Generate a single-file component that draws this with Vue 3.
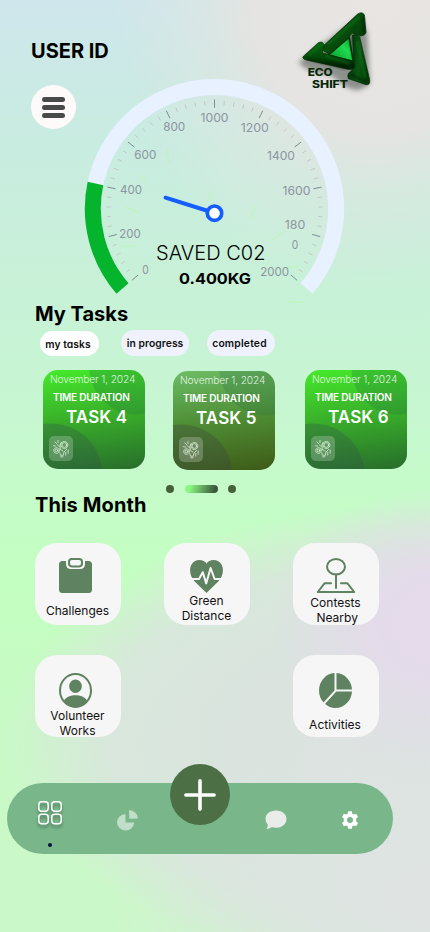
<script setup>
const CX = 214.5
const CY = 208.8
const START = 139.1
const SWEEP = 261.8

function polar(r, deg) {
  const a = (deg * Math.PI) / 180
  return [CX + r * Math.cos(a), CY + r * Math.sin(a)]
}

function arc(r, from, to) {
  const [x1, y1] = polar(r, from)
  const [x2, y2] = polar(r, to)
  const large = to - from > 180 ? 1 : 0
  return `M${x1} ${y1}A${r} ${r} 0 ${large} 1 ${x2} ${y2}`
}

const track = arc(121.7, START, START + SWEEP)
const progress = arc(121.7, START, 192)

const ticks = Array.from({ length: 51 }, (_, i) => {
  const major = i % 5 === 0
  const deg = START + (SWEEP * i) / 50
  const [x1, y1] = polar(major ? 109.3 : 108.3, deg)
  const [x2, y2] = polar(major ? 101 : 103.8, deg)
  return { x1, y1, x2, y2, major }
})

const labels = [
  { t: '0', x: 145.5, y: 273.7, w: 6.5 },
  { t: '200', x: 130, y: 238, w: 21.5 },
  { t: '400', x: 131, y: 194.3, w: 22 },
  { t: '600', x: 145.3, y: 159.3, w: 22 },
  { t: '800', x: 174.2, y: 131.3, w: 22 },
  { t: '1000', x: 214.5, y: 122, w: 28 },
  { t: '1200', x: 254.7, y: 132.3, w: 28 },
  { t: '1400', x: 281, y: 159.5, w: 28 },
  { t: '1600', x: 296.5, y: 194.7, w: 28 },
  { t: '180', x: 295, y: 229, w: 20.5 },
  { t: '0', x: 295, y: 249, w: 6.5 },
  { t: '2000', x: 274.7, y: 276, w: 29 },
]

const streaks = [
  'M166.5 149.5L170 163', 'M139.5 175L150 185.5', 'M125 207L139 212.5', 'M121 246H135',
  'M211 192V200', 'M256 206L250 219', 'M282.5 232.5L271 241', 'M298 266L286 268', 'M288 301.5L303 302.5',
]

const filters = [
  { name: 'my tasks', cls: 'pill-active' },
  { name: 'in progress', cls: '' },
  { name: 'completed', cls: 'pill-done' },
]

const tasks = [
  { name: 'TASK 4', cls: '' },
  { name: 'TASK 5', cls: 'card-olive' },
  { name: 'TASK 6', cls: '' },
]
</script>

<template>
  <main class="screen">
    <section class="hero">
      <svg class="gauge" viewBox="0 0 430 300">
        <path :d="track" class="track" />
        <path :d="progress" class="progress" />
        <line v-for="(k, i) in ticks" :key="i" :x1="k.x1" :y1="k.y1" :x2="k.x2" :y2="k.y2" :class="k.major ? 'major' : 'minor'" />
        <path v-for="s in streaks" :key="s" :d="s" class="streak" />
        <text v-for="(l, i) in labels" :key="'l' + i" :x="l.x" :y="l.y" :textLength="l.w" lengthAdjust="spacingAndGlyphs" class="label">{{ l.t }}</text>
        <path d="M165.5 197.7L214.5 213" class="needle" />
        <circle cx="214.5" cy="213.2" r="7.2" class="hub" />
        <text x="156" y="260" textLength="109.5" class="saved">SAVED C02</text>
        <text x="179" y="283.7" textLength="72" lengthAdjust="spacingAndGlyphs" class="amount">0.400KG</text>
      </svg>
      <header class="top">
        <div class="user">
          <h1 class="title">USER ID</h1>
          <button class="menu" aria-label="Menu"><i></i><i></i><i></i></button>
        </div>
        <svg class="logo" viewBox="0 0 390 330">
          <defs>
            <linearGradient id="ga" x1="0" y1="0" x2="1" y2="1"><stop offset="0" stop-color="#0b5a13" /><stop offset=".45" stop-color="#07500d" /><stop offset="1" stop-color="#012b04" /></linearGradient>
            <linearGradient id="gb" x1="0" y1="0" x2=".3" y2="1"><stop offset="0" stop-color="#08700f" /><stop offset=".6" stop-color="#04470a" /><stop offset="1" stop-color="#012604" /></linearGradient>
            <linearGradient id="gc" x1="0" y1="0" x2="1" y2=".2"><stop offset="0" stop-color="#012e04" /><stop offset=".6" stop-color="#0a5713" /><stop offset="1" stop-color="#023a07" /></linearGradient>
            <linearGradient id="gi" x1="0" y1="1" x2="1" y2="0"><stop offset="0" stop-color="#0a8f2a" /><stop offset=".6" stop-color="#1ddc50" /><stop offset="1" stop-color="#0a9a2b" /></linearGradient>
            <filter id="soft" x="-30%" y="-30%" width="160%" height="160%"><feGaussianBlur stdDeviation="8" /></filter>
            <filter id="edge"><feGaussianBlur stdDeviation="2.5" /></filter>
          </defs>
          <path d="M86 186L160 130L270 48L292 100L300 250Q270 282 230 262L180 225Q100 214 86 186Z" fill="#343c34" opacity=".5" filter="url(#soft)" />
          <path d="M237 112L174 166L250 184Z" fill="url(#gi)" stroke="#033d0b" stroke-width="5" />
          <path d="M160 152L162 136L262 43Q275 33 283 44L288 97Q286 107 272 108L247 100L233 114L178 163Z" class="arm" fill="url(#ga)" />
          <path d="M247 105Q256 100 269 110L299 239Q301 256 288 254L235 236Q229 220 246 211L252 189Z" class="arm" fill="url(#gc)" />
          <path d="M101 168L145 128Q160 121 162 137L157 158L238 181Q260 187 253 204Q243 213 222 205L105 179Q94 174 101 168Z" class="arm" fill="url(#gb)" />
          <path d="M176 132L266 52M118 165L148 138M168 169L238 190M261 124L286 232" class="shine" filter="url(#edge)" />
          <path d="M280 52L282 96M112 176L225 205M242 111L249 176M244 224L284 246" class="dark" filter="url(#edge)" />
          <text x="113" y="227" textLength="75" lengthAdjust="spacingAndGlyphs" class="brand">ECO</text>
          <text x="126" y="263" textLength="108" lengthAdjust="spacingAndGlyphs" class="brand">SHIFT</text>
        </svg>
      </header>
    </section>

    <section class="tasks">
      <h2 class="title">My Tasks</h2>
      <nav class="pills">
        <button v-for="f in filters" :key="f.name" :class="['pill', f.cls]">{{ f.name }}</button>
      </nav>
      <div class="cards">
        <article v-for="t in tasks" :key="t.name" :class="['card', t.cls]">
          <p class="date">November 1, 2024</p>
          <p class="duration">TIME DURATION</p>
          <h3 class="task">{{ t.name }}</h3>
          <span class="badge">
            <svg viewBox="0 0 20 20" class="bulb">
              <circle cx="13" cy="5.8" r="3.7" stroke-dasharray="1.6 .8" />
              <circle cx="13" cy="5.8" r="2.5" />
              <circle cx="4.7" cy="11.6" r="2.9" stroke-dasharray="1.3 .7" />
              <circle cx="4.7" cy="11.6" r="1.4" />
              <path d="M8.8 9.4Q6.800 6 9.600 3M8.200 13.800L9 16.600H12L12.600 13.200L15.500 10.400M9.200 18.200H11.600M3 2.500L5 4.400M1.500 6.500L4 7M6.300 1V3.200M5.500 5.500L7.700 7.500M14.500 13.500V16.500M17 11V14.500M7.600 9.800L11.600 12.200" />
            </svg>
          </span>
        </article>
      </div>
      <div class="pager"><i></i><b></b><i></i></div>
    </section>

    <section class="month">
      <h2 class="title">This Month</h2>
      <div class="tiles">
        <a class="tile tile-left">
          <svg width="33" height="35" viewBox="0 0 33 35">
            <path class="f" d="M3.5 3H7V6Q7 11 12 11H21Q26 11 26 6V3H29.5Q33 3 33 6.5V31.500Q33 35 29.500 35H3.500Q0 35 0 31.500V6.500Q0 3 3.500 3Z" />
            <rect class="s" x="10" y="1" width="13" height="7.400" rx="2.800" stroke-width="2" />
          </svg>
          <span class="cap cap-one">Challenges</span>
        </a>
        <a class="tile tile-heart">
          <svg width="33" height="33" viewBox="0 0 33 33">
            <path class="f" d="M16.500 3.700C19-1 28-1.500 31.500 4.500C34.500 10 32.500 17 28.500 21.300C25 25 20.500 29 16.500 33C12.500 29 8 25 4.500 21.300C.5 17-1.500 10 1.500 4.500C5-1.500 14-1 16.500 3.700Z" />
            <path class="w" d="M1 19H9L12.800 12.200L16.200 23.400L20.600 8L24.600 19H32" stroke-width="2" />
          </svg>
          <span class="cap">Green<br>Distance</span>
        </a>
        <a class="tile">
          <svg width="40" height="35" viewBox="0 0 40 35">
            <ellipse class="s" cx="20" cy="8.800" rx="9" ry="7.800" stroke-width="2" />
            <path class="s" d="M20 16.500V30M15 25.300H8.500L1.800 34H38.200L31.500 25.300H25" stroke-width="2" />
          </svg>
          <span class="cap cap-low">Contests<br>&nbsp;Nearby</span>
        </a>
        <a class="tile tile-vol tile-left">
          <svg width="33" height="35" viewBox="0 0 33 35">
            <ellipse class="s" cx="16.500" cy="17.500" rx="15.500" ry="16.500" stroke-width="2" />
            <ellipse class="f" cx="16.500" cy="13.200" rx="6.300" ry="6.700" />
            <path class="f" d="M5 27.500C9 20.500 24 20.500 28 27.500Q23 34.500 16.500 34.500Q10 34.500 5 27.500Z" />
          </svg>
          <span class="cap">Volunteer<br>Works</span>
        </a>
        <a class="tile tile-act">
          <svg width="33" height="35" viewBox="0 0 33 35">
            <ellipse class="f" cx="16.500" cy="17.500" rx="16.500" ry="17.500" />
            <path class="w" d="M16.500 0V17.800L5 30.500M16.500 17.600H33" stroke-width="2" />
          </svg>
          <span class="cap cap-one">Activities</span>
        </a>
      </div>
    </section>

    <footer class="bar">
      <a class="item item-home">
        <svg width="24" height="24" viewBox="0 0 24 24" class="grid-icon">
          <rect x=".8" y=".8" width="9.400" height="9.400" rx="3" /><rect x="13.800" y=".8" width="9.400" height="9.400" rx="3" />
          <rect x=".8" y="13.300" width="9.400" height="9.400" rx="3" /><rect x="13.800" y="13.300" width="9.400" height="9.400" rx="3" />
        </svg>
        <i class="dot"></i>
      </a>
      <a class="item">
        <svg width="21" height="21" viewBox="0 0 21 21" class="pie">
          <path d="M8.500 4V12.500H17.200A8.600 8.200 0 1 1 8.500 4Z" /><path d="M12 .3A9 8.200 0 0 1 21 8.500L12.300 8.800Z" />
        </svg>
      </a>
      <button class="fab" aria-label="Add">
        <svg width="32" height="32" viewBox="0 0 32 32"><path d="M16 1.900V30.100M1.900 16H30.100" /></svg>
      </button>
      <a class="item">
        <svg width="22" height="20" viewBox="0 0 22 20">
          <path fill="#eaecea" d="M11 .5C17 .5 21.500 4 21.500 9S17 17.800 11 17.800Q8.700 17.800 6.800 17.100Q4.500 19 1.200 19Q3 17 2.900 15Q.5 12.500 .5 9C.5 4 5 .5 11 .5Z" />
        </svg>
      </a>
      <a class="item item-gear">
        <svg width="18" height="18" viewBox="0 0 18 18">
          <path fill="#fff" fill-rule="evenodd" d="M7.200 .3H10.800L11.300 2.700L12.900 3.600L15.200 2.800L17 5.900L15.200 7.500V10.500L17 12.100L15.200 15.200L12.900 14.400L11.300 15.300L10.800 17.700H7.200L6.700 15.300L5.100 14.400L2.800 15.200L1 12.100L2.800 10.500V7.500L1 5.900L2.800 2.800L5.100 3.600L6.700 2.700ZM9 6A3 3 0 1 0 9 12A3 3 0 1 0 9 6Z" />
        </svg>
      </a>
    </footer>
  </main>
</template>

<style>
body { background: #c9f9c8; }
</style>

<style scoped>
* { box-sizing: border-box; margin: 0; padding: 0; }
button { border: 0; font: inherit; }
.screen {
  width: 430px;
  height: 932px;
  overflow: hidden;
  font-family: Inter, sans-serif;
  color: #000;
  background:
    radial-gradient(ellipse 170px 140px at 440px 625px, #e6daeb 0, #e4dbea 35%, rgba(226, 222, 232, 0) 100%),
    radial-gradient(ellipse 340px 200px at 450px 900px, #dfe3e3 0, rgba(221, 228, 225, .85) 40%, rgba(219, 230, 222, 0) 100%),
    radial-gradient(ellipse 425px 236px at 430px 738px, #dde1e2 0, #dae4de 50%, rgba(219, 228, 223, .85) 76%, rgba(218, 230, 221, .5) 88%, rgba(208, 244, 208, 0) 100%),
    radial-gradient(ellipse 260px 290px at 375px 0, #e8e5e3 0, #e6e4e2 45%, rgba(224, 230, 225, .6) 65%, rgba(214, 232, 222, 0) 100%),
    linear-gradient(#cfe6ec 0, #c9ebe2 120px, #c8f0d9 260px, #c7f6d2 400px, #c5fcc8 500px, #c3ffc0 590px, #c9f9c7 740px, #cbf8c9 932px);
}
.hero { display: grid; height: 300px; }
.hero > * { grid-area: 1 / 1; }
.gauge { width: 430px; height: 300px; overflow: visible; }
.track, .progress { fill: none; stroke-width: 16; stroke: #e7f1ff; }
.progress { stroke: #03b42c; }
.major { stroke: #7c8c93; stroke-width: 1; }
.minor { stroke: #bfc3c6; stroke-width: .9; }
.streak { stroke: #baf8b3; stroke-width: 1; }
.label { font-size: 12.300px; font-weight: 400; fill: #8c95a0; text-anchor: middle; }
.needle { stroke: #145dff; stroke-width: 4; stroke-linecap: round; }
.hub { fill: #fff; stroke: #145dff; stroke-width: 3.700; }
.saved { font-size: 20px; font-weight: 300; }
.amount { font-size: 15px; font-weight: 700; }
.top { display: flex; justify-content: space-between; padding: 0 30px 0 31px; height: 130px; }
.user { padding-top: 39px; }
.title { font-size: 20px; line-height: 25px; font-weight: 700; white-space: nowrap; }
.month .title { letter-spacing: .12px; }
.menu { display: flex; flex-direction: column; align-items: center; justify-content: center; gap: 3px; width: 45px; height: 44px; margin-top: 21px; border-radius: 50%; background: #fffafa; }
.menu i { width: 23px; height: 5px; border-radius: 3px; background: #49484b; }
.logo { width: 130px; height: 110px; }
.arm { stroke: #022d05; stroke-width: 2; stroke-linejoin: round; }
.shine { fill: none; stroke: #1a8a28; stroke-width: 5; stroke-linecap: round; opacity: .5; }
.dark { fill: none; stroke: #001a02; stroke-width: 6; stroke-linecap: round; opacity: .6; }
.brand { font-size: 30px; font-weight: 800; fill: #06260a; }

.tasks { padding-top: 2px; }
.tasks .title, .month .title { padding-left: 35px; }
.pills { display: flex; align-items: flex-end; margin: 3px 0 0 40px; height: 26px; }
.pill { width: 68px; height: 26px; border-radius: 13px; background: #eff2fd; font-size: 10.300px; font-weight: 600; letter-spacing: .08px; font-feature-settings: "cv11"; color: #111; margin-right: 18px; white-space: nowrap; }
.pill-active { width: 59px; height: 25px; background: #fff; margin-right: 22px; padding-right: 3px; }
.pill-done { letter-spacing: .2px; padding-right: 3px; }
.cards { display: flex; padding: 14px 0 0 43px; height: 128px; }
.card {
  width: 102px; height: 98.500px; flex: none; margin-right: 28px; border-radius: 15px; padding: 2px 0 0 7px; color: #fff; overflow: hidden;
  font-feature-settings: "cv11";
  background:
    radial-gradient(circle 47px at 93px -2px, rgba(30, 110, 60, .25) 98%, transparent 100%),
    radial-gradient(circle 52px at 8px 105px, rgba(50, 80, 75, .3) 98%, transparent 100%),
    linear-gradient(172deg, #45ea2b 0, #39ae2a 48%, #276d2b 100%);
}
.card-olive {
  margin: 1px 30px 0 0;
  background:
    radial-gradient(circle 47px at 93px -2px, rgba(40, 110, 70, .23) 98%, transparent 100%),
    radial-gradient(circle 52px at 8px 105px, rgba(60, 70, 65, .35) 98%, transparent 100%),
    linear-gradient(172deg, #6cbd66 0, #4f8f35 48%, #3e5a17 100%);
}
.date { font-size: 10.200px; line-height: 14px; font-weight: 300; letter-spacing: -.12px; white-space: nowrap; color: rgba(255, 255, 255, .85); }
.duration { margin: 5px 0 0 3px; font-size: 10px; line-height: 13px; font-weight: 600; letter-spacing: -.2px; white-space: nowrap; }
.task { margin: 2px 0 0 16px; font-size: 17px; line-height: 22px; font-weight: 600; letter-spacing: .1px; white-space: nowrap; }
.badge { display: flex; align-items: center; justify-content: center; width: 24px; height: 25px; margin: 8px 0 0 -1px; border-radius: 5px; background: rgba(255, 255, 255, .22); }
.bulb { width: 19px; height: 20px; fill: none; stroke: #f2fff0; stroke-width: .7; stroke-linecap: round; }
.pager { display: flex; align-items: center; padding-left: 166px; margin-top: 1px; height: 8px; }
.pager i { width: 8px; height: 8px; border-radius: 50%; background: #466039; }
.pager b { width: 33px; height: 8px; margin: 0 10px 0 11px; border-radius: 4px; background: linear-gradient(105deg, #8af783 15%, #3b5639 90%); }

.tiles { display: grid; grid-template-columns: repeat(3, 86px); grid-auto-rows: 82px; gap: 30px 43px; padding: 25px 0 0 35px; }
.tile { display: flex; flex-direction: column; align-items: center; padding-top: 15px; border-radius: 22px; background: #f6f6f6; }
.tile svg { flex: none; margin-right: 1px; }
.tile-heart { padding-top: 17px; }
.tile-vol { padding-top: 18px; }
.tile-act { grid-column: 3; padding-top: 18px; }
.tile-left svg { margin-right: 5px; }
.f { fill: #5f8260; }
.s { fill: none; stroke: #5f8260; stroke-linejoin: round; stroke-linecap: round; }
.w { fill: none; stroke: #f6f6f6; stroke-linejoin: round; }
.cap { font-size: 12px; line-height: 15px; text-align: center; white-space: nowrap; color: #111; margin-right: 1px; }
.cap-low { margin-top: 2px; }
.cap-one { margin-top: 10px; }
.tile-act .cap-one { margin: 9px 2px 0 0; }

.bar { display: flex; align-items: flex-start; width: 386px; height: 71px; margin: 46px 0 0 7px; border-radius: 35.500px; background: #79b78a; padding-left: 31px; }
.item { display: flex; flex-direction: column; align-items: center; flex: none; margin-top: 27px; }
.item svg { display: block; }
.item-home { margin: 18px 55px 0 0; }
.item-gear { margin: 28px 0 0 54px; }
.grid-icon { fill: none; stroke: #fff; stroke-width: 1.500; overflow: visible; filter: drop-shadow(0 3px 1.500px rgba(0, 0, 0, .35)); }
.dot { width: 4px; height: 4px; border-radius: 50%; background: #03133a; margin-top: 18px; }
.pie { fill: #c1dec9; }
.fab { display: flex; align-items: center; justify-content: center; width: 60px; height: 61px; margin: -19px 35px 0 32px; border-radius: 50%; background: #4d6f45; flex: none; }
.fab path { stroke: #fff; stroke-width: 3.600; stroke-linecap: round; }
</style>
